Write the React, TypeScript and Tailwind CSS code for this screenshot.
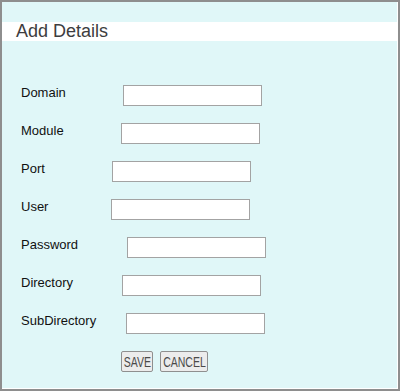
import { useState } from "react";

// Add Details form: label/input rows on a light cyan panel
const fields = [
  { label: "Domain", labelW: "w-[102px]" },
  { label: "Module", labelW: "w-[100px]" },
  { label: "Port", labelW: "w-[91px]" },
  { label: "User", labelW: "w-[90px]" },
  { label: "Password", labelW: "w-[106px]" },
  { label: "Directory", labelW: "w-[101px]" },
  { label: "SubDirectory", labelW: "w-[105px]" },
];

function FormButton({ children, width }: { children: string; width: string }) {
  return (
    <button
      className={`${width} h-[21px] flex items-center justify-center rounded-[2px] border border-[#8f8f8f] bg-[#ececec] text-[15px] leading-none text-[#4a4a4a]`}
    >
      <span className="inline-block scale-x-[0.7]">{children}</span>
    </button>
  );
}

export default function App() {
  const [values, setValues] = useState<Record<string, string>>({});

  return (
    <div className="w-[400px] h-[392px] bg-white font-['Liberation_Sans',Arial,sans-serif]">
      <div className="w-[400px] h-[391px] border-2 border-[#8e8e8e]">
        <div className="h-full pt-5 border-r border-b border-white bg-[#e0f7f8]">
          {/* Title band */}
          <div className="h-[19px] bg-white pl-[14px] text-[18px] leading-[19px] text-[#3d3d40]">
            Add Details
          </div>

          <div className="mt-[44px] pl-[19px] flex flex-col gap-[17px]">
            {fields.map((f) => (
              <div key={f.label} className="flex items-start">
                <label className={`${f.labelW} mt-px text-[13px] leading-[14px] text-[#111]`}>{f.label}</label>
                <input
                  type="text"
                  value={values[f.label] ?? ""}
                  onChange={(e) => setValues({ ...values, [f.label]: e.target.value })}
                  className="w-[139px] h-[21px] bg-white border border-[#a3a3a3] outline-none px-1 text-[13px]"
                />
              </div>
            ))}

            <div className="flex gap-[7px] pl-[100px]">
              <FormButton width="w-[32px]">SAVE</FormButton>
              <FormButton width="w-[48px]">CANCEL</FormButton>
            </div>
          </div>
        </div>
      </div>
    </div>
  );
}
